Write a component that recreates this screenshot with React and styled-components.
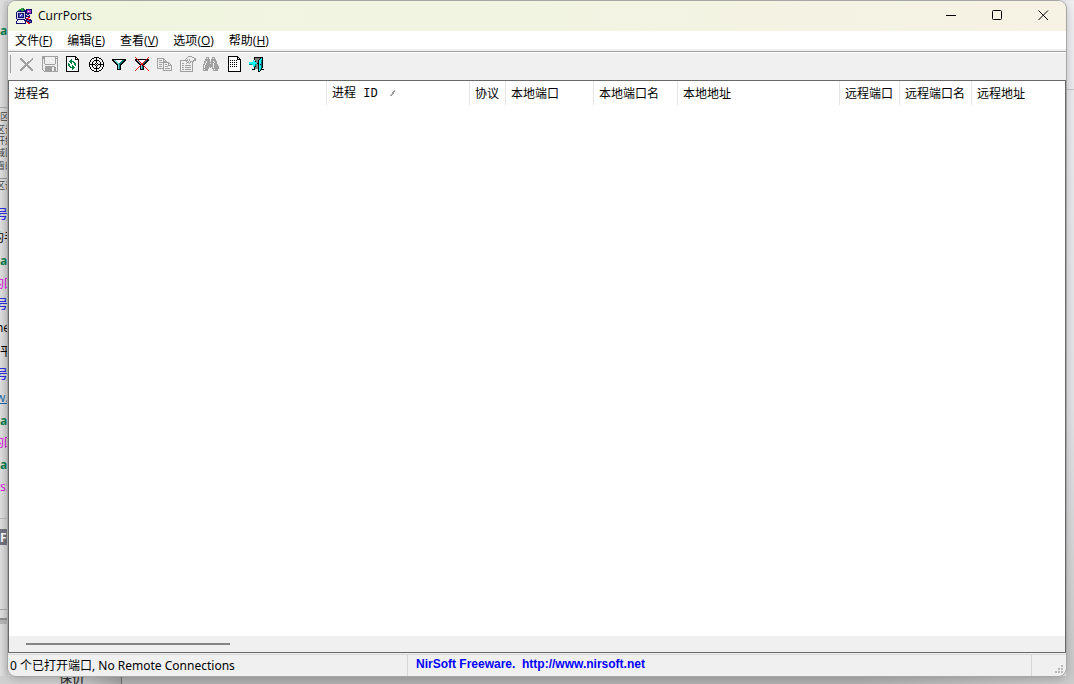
import React from 'react'
import styled, { createGlobalStyle } from 'styled-components';

const GlobalStyle = createGlobalStyle`
  * {
    box-sizing: border-box;
  }
  body {
    margin: 0;
    font-family: "Open Sans", "Noto Sans CJK SC", sans-serif;
    font-size: 12px;
    color: #000;
  }
`;

const Desktop = styled.div`
  display: grid;
  grid-template-columns: 8px minmax(0, 1fr) 8px;
  grid-template-rows: minmax(0, 1fr) 8px;
  height: 100vh;
  padding-top: 1px;
  overflow: hidden;
  background: linear-gradient(to right, #dcdcdc 0, #d0d0d0 50%, #ececee 100%);
`;

const Behind = styled.div`
  overflow: hidden;
  background: linear-gradient(to right, #e2e2e2, #cfcfcf);
`;

const BehindLine = styled.div`
  display: flex;
  align-items: center;
  height: ${(p) => p.$height}px;
  color: ${(p) => p.$color || '#000'};
  background: ${(p) => p.$fill || 'transparent'};
  font-size: ${(p) => (p.$small ? 9 : 12)}px;
  font-weight: ${(p) => (p.$bold ? 700 : 400)};
  text-decoration: ${(p) => (p.$underline ? 'underline' : 'none')};
  white-space: nowrap;

  span {
    margin-left: -${(p) => p.$cut || 0}px;
  }
`;

const RightEdge = styled.div`
  background: linear-gradient(#f0f0f3, #e6e6e9 60%, #cbcbcb);
`;

const RightTop = styled.div`
  height: 89px;
  border-bottom: 1px solid #c8c8ca;
`;

const BottomEdge = styled.div`
  grid-column: 1 / -1;
  display: flex;
  overflow: hidden;
  background: linear-gradient(to right, #b4b4b4 80%, #cccccc);
`;

const BottomTab = styled.div`
  display: flex;
  align-items: flex-end;
  justify-content: flex-end;
  width: 122px;
  padding-right: 36px;
  border-right: 1px solid #6c6c6c;
  background: linear-gradient(to right, #d2d2d2 60%, #a8a8a8);
  color: #333;
  font-size: 13px;
  font-weight: 500;
  line-height: 14px;
`;

const Window = styled.main`
  display: flex;
  flex-direction: column;
  overflow: hidden;
  border-radius: 8px;
  background: #f0f0f0;
  box-shadow: 0 0 0 1px #a6a6a6, 0 2px 12px rgba(0, 0, 0, 0.25);
  z-index: 1;
`;

const TitleBar = styled.header`
  display: flex;
  align-items: flex-start;
  height: 30px;
  background: linear-gradient(to right, #eff5df, #f2f4e2 50%, #f6f2e4);
`;

const TitleGroup = styled.div`
  display: flex;
  flex: 1;
  align-items: center;
  gap: 6px;
  height: 29px;
  padding-left: 8px;
`;

const Title = styled.h1`
  margin: 0;
  font-size: 12px;
  font-weight: 400;
  line-height: 16px;
`;

const CaptionButton = styled.button`
  display: flex;
  align-items: center;
  justify-content: center;
  width: 46px;
  height: 29px;
  padding: 0;
  border: none;
  background: none;
`;

const MenuBar = styled.nav`
  display: flex;
  gap: 1px;
  height: 18px;
  background: #fff;
`;

const MenuButton = styled.button`
  padding: 0 7px;
  border: none;
  background: none;
  color: #000;
  font: inherit;
  line-height: 20px;
  white-space: nowrap;
`;

const ToolBar = styled.div`
  display: flex;
  align-items: center;
  height: 31px;
  padding: 2px 0 4px 2px;
  background: linear-gradient(#f0f0f0 2px, #a0a0a0 2px, #a0a0a0 3px, #fff 3px, #fff 4px, #f0f0f0 4px);
`;

const Grip = styled.span`
  width: 1px;
  height: 18px;
  margin-right: 4px;
  background: #a0a0a0;
`;

const ToolButton = styled.button`
  display: flex;
  align-items: center;
  justify-content: center;
  width: 23px;
  height: 22px;
  padding: 0;
  border: none;
  background: none;
`;

const ListFrame = styled.section`
  display: flex;
  flex-direction: column;
  flex: 1;
  min-height: 0;
  border: 1px solid #696969;
  background: #fff;
`;

const ListBody = styled.div`
  flex: 1;
  overflow: hidden;
`;

const PortTable = styled.table`
  width: 100%;
  table-layout: fixed;
  border-collapse: separate;
  border-spacing: 0;
`;

const Column = styled.col`
  width: ${(p) => (p.$width ? `${p.$width}px` : 'auto')};
`;

const HeadCell = styled.th`
  height: 24px;
  padding: 0 0 0 5px;
  border-right: ${(p) => (p.$last ? 'none' : '1px solid #e5e5e5')};
  font-family: "Noto Sans CJK SC", sans-serif;
  font-weight: 400;
  line-height: 16px;
  text-align: left;
  white-space: nowrap;
  overflow: hidden;
`;

const Mono = styled.span`
  font-family: "Liberation Mono", monospace;
`;

const SortMark = styled.svg`
  margin-left: 12px;
`;

const ScrollTrack = styled.div`
  height: 16px;
  padding: 7px 17px;
  background: #f0f0f0;
`;

const ScrollThumb = styled.div`
  width: 20%;
  height: 2px;
  background: #858585;
`;

const StatusBar = styled.footer`
  display: flex;
  height: 23px;
  padding-top: 1px;
  border-top: 1px solid #f0f0f0;
  box-shadow: inset 0 1px 0 #d7d7d7;
`;

const StatusText = styled.div`
  width: 400px;
  padding-left: 2px;
  border-right: 1px solid #d7d7d7;
  font-family: "Noto Sans", "Noto Sans CJK SC", sans-serif;
  line-height: 21px;
  white-space: nowrap;
`;

const StatusLink = styled.div`
  flex: 1;
  padding-left: 8px;
  border-right: 1px solid #d7d7d7;

  a {
    color: #0000ff;
    font: bold 12px/18px "Liberation Sans", Arial, sans-serif;
    text-decoration: none;
    white-space: pre;
  }
`;

const SizeGrip = styled.div`
  display: flex;
  align-items: flex-end;
  justify-content: flex-end;
  width: 34px;
  padding: 0 2px 2px 0;
`;

const palette = {
  k: '#000000',
  g: '#a0a0a0',
  d: '#808080',
  w: '#ffffff',
  l: '#d0d0e0',
  n: '#008040',
  t: '#008080',
  c: '#00ffff',
  a: '#70d0d0',
  r: '#ff0000',
  b: '#101070',
  u: '#5050c8',
  p: '#b040d0',
  e: '#30a040',
};

const bitmaps = {
  app: [
    '.....eee........',
    '...eeeebe.bbbbbb',
    '..eebeeebbbppppb',
    '.bbbbbbbbbbpwppb',
    'bllllllllbbppppb',
    'blbbbbbblbbbbbbb',
    'blbuuwublb.bb...',
    'blbuwuublbbllb..',
    'blbuuuublbbbbb..',
    'blbbbbbblb..rr..',
    'bllllllllbrrp...',
    '.bbbbbbbb.bbrrb.',
    '.bwwwwwwbbbuubbb',
    'bwlwlwlwlbrbbuub',
    'bwwwwwwwwb.rrbbb',
    'bbbbbbbbbb..rr..',
  ],
  close: [
    '................',
    '................',
    '.gg..........g..',
    '.ggg........gg..',
    '..ggg......gg...',
    '...ggg...ggg....',
    '....ggg.ggg.....',
    '.....ggggg......',
    '......ggg.......',
    '.....ggggg......',
    '....ggg.ggg.....',
    '...ggg...ggg....',
    '..ggg.....ggg...',
    '.ggg.......ggg..',
    '.gg.........gg..',
    '................',
  ],
  save: [
    'gggggggggggggggg',
    'ggg..........g.g',
    'ggg..........ggg',
    'g.g..........g.g',
    'g.g..........g.g',
    'g.g..........g.g',
    'g.g..........g.g',
    'g.g..........g.g',
    'g..gggggggggg..g',
    'g..............g',
    'g..gggggggggg..g',
    'g..ggggggg..gg.g',
    'g..ggggggg..gg.g',
    'g..ggggggg..gg.g',
    '.g.ggggggg..gg.g',
    '..gggggggggggggg',
  ],
  refresh: [
    '.kkkkkkkkkk.....',
    '.kwwwwwwwwkk....',
    '.kwwwwwwwwkwk...',
    '.kwwwwnwwwkkkk..',
    '.kwwwnnwwwwwwk..',
    '.kwwnnnnnwwwwk..',
    '.kwwwnnwnnwwwk..',
    '.kwnwwnwwnnwwk..',
    '.kwnnwwwwnnwwk..',
    '.kwnnwwnwwnwwk..',
    '.kwwnnwnnwwwwk..',
    '.kwwwnnnnnwwwk..',
    '.kwwwwwnnwwwwk..',
    '.kwwwwwnwwwwwk..',
    '.kwwwwwwwwwwwk..',
    '.kkkkkkkkkkkkk..',
  ],
  target: [
    '................',
    '......kkkkk.....',
    '....kk..k..kk...',
    '...k....k....k..',
    '..k...kkkkk...k.',
    '..k..k..k..k..k.',
    '.k..k...k...k..k',
    '.k..k..k.k..k..k',
    '.kkkkkk.k.kkkkkk',
    '.k..k..k.k..k..k',
    '.k..k...k...k..k',
    '..k..k..k..k..k.',
    '..k...kkkkk...k.',
    '...k....k....k..',
    '....kk..k..kk...',
    '......kkkkk.....',
  ],
  funnel: [
    '................',
    '................',
    '................',
    '.kkkkkkkkkkkkkk.',
    '.kkaawwwwwwttkk.',
    '..kkaawwwwttkk..',
    '...kkaawwttkk...',
    '....kkaattkk....',
    '.....kkatkk.....',
    '......katk......',
    '......katk......',
    '......katk......',
    '......katk......',
    '......kkkk......',
    '................',
    '................',
  ],
  funnelOff: [
    '................',
    '.r............r.',
    '..r..........r..',
    '.kkrkkkkkkkkrkk.',
    '.kkarwwwwwwrtkk.',
    '..kkarwwwwrtkk..',
    '...kkarwwrtkk...',
    '....kkarrtkk....',
    '.....kkrrkk.....',
    '......rakr......',
    '.....rkatkr.....',
    '....r.katk.r....',
    '...r..katk..r...',
    '..r...kkkk...r..',
    '.r............r.',
    '................',
  ],
  copy: [
    '................',
    '................',
    'ggggggg.........',
    'g.....gg........',
    'g.ggg.g.g.......',
    'g.....gggg......',
    'g.gggggggggg....',
    'g.....g....gg...',
    'g.ggg.g.gg.g.g..',
    'g.....g....gggg.',
    'g.ggg.g.ggg...g.',
    'g.....g.......g.',
    'ggggggg.ggggg.g.',
    '......g.......g.',
    '......ggggggggg.',
    '................',
  ],
  properties: [
    '........gggg....',
    '.......g....gg..',
    '......g.......gg',
    '.....g.g.g....gg',
    'gggggggg.g...ggg',
    'g.....g.g.gggg..',
    'g......gg.g.g...',
    'g.gg..g..g..g...',
    'g...........g...',
    'g.gg.gggggg.g...',
    'g...........g...',
    'g.gg.gggggg.g...',
    'g...........g...',
    'g.gg.gggggg.g...',
    'g...........g...',
    'ggggggggggggg...',
  ],
  find: [
    '................',
    '...ggg...ggg....',
    '...g.g...g.g....',
    '..ggggg.ggggg...',
    '..ggggg.ggggg...',
    '.gg.ggg.gg.ggg..',
    '.gg.ggggggg.gg..',
    '.g.gggg.gg.ggg..',
    'gg.ggggggg.gggg.',
    'g.gggggggg.gggg.',
    'g.gggggggg.ggggg',
    'g.gggg.g.g.ggggg',
    'gggggg...ggggggg',
    'g.ggg.....g.ggg.',
    'ggggg.....ggggg.',
    '................',
  ],
  report: [
    '..kkkkkkkkkk....',
    '..kwwwwwwwwkk...',
    '..kwwwwwwwwkwk..',
    '..kwwwwwwwwkkkk.',
    '..kwkwkwkwkwwwk.',
    '..kwwwwwwwwwwwk.',
    '..kwkwkwkwkwwwk.',
    '..kwwwwwwwwwwwk.',
    '..kwkwkwkwkwwwk.',
    '..kwwwwwwwwwwwk.',
    '..kwkwkwkwkwwwk.',
    '..kwwwwwwwwwwwk.',
    '..kwwwwwwwwwwwk.',
    '..kwwwwwwwwwwwk.',
    '..kwwwwwwwwwwwk.',
    '..kkkkkkkkkkkkk.',
  ],
  exit: [
    '................',
    '.....kkkkkkkkk..',
    '.....kdddddkck..',
    '.....kddddkcck..',
    '....c.dddkcctk..',
    '....cckddkcctk..',
    'cccccccddkcctk..',
    'cccccccckkcctk..',
    'tttccctddkcktk..',
    '....cctddkcctk..',
    '....ctkddkcctk..',
    '.....kdddkcctk..',
    '.....kdddkcck...',
    '...kkk...kctkkk.',
    '.........kck....',
    '.........kk.....',
  ],
};

const PixelIcon = ({ name }) => (
  <svg width="16" height="16" viewBox="0 0 16 16" shapeRendering="crispEdges" aria-hidden="true">
    {bitmaps[name].map((row, y) =>
      [...row].map((ch, x) =>
        palette[ch] ? <rect key={`${x}-${y}`} x={x} y={y} width="1" height="1" fill={palette[ch]} /> : null
      )
    )}
  </svg>
);

const menus = [
  ['文件', 'F'],
  ['编辑', 'E'],
  ['查看', 'V'],
  ['选项', 'O'],
  ['帮助', 'H'],
];

const tools = [
  ['close', '关闭连接', true],
  ['save', '保存', true],
  ['refresh', '刷新'],
  ['target', '定位窗口'],
  ['funnel', '高级过滤'],
  ['funnelOff', '清除过滤'],
  ['copy', '复制', true],
  ['properties', '属性', true],
  ['find', '查找', true],
  ['report', '报告'],
  ['exit', '退出'],
];

const columns = [
  { name: '进程名', width: 318 },
  { name: '进程', mono: ' ID', width: 143, sorted: true },
  { name: '协议', width: 36 },
  { name: '本地端口', width: 88 },
  { name: '本地端口名', width: 84 },
  { name: '本地地址', width: 162 },
  { name: '远程端口', width: 60 },
  { name: '远程端口名', width: 72 },
  { name: '远程地址' },
];

const green = '#087f50';
const magenta = '#e000e0';
const blue = '#0000e8';
const grey = '#444';

// visible strip of the page under the window, top to bottom
const behindLines = [
  { height: 18 },
  { height: 22, text: 'ам', color: green, bold: true },
  { height: 66 },
  { height: 1, fill: '#a8a8a8' },
  { height: 16, text: '区', small: true, color: grey },
  { height: 10, text: '区设', small: true, color: grey, cut: 4 },
  { height: 12, text: '开始', small: true, color: grey, cut: 4 },
  { height: 13, text: '域区', small: true, color: grey, cut: 4 },
  { height: 13, text: '看的', small: true, color: grey, cut: 4 },
  { height: 6 },
  { height: 1, fill: '#999' },
  { height: 12, text: '区调', small: true, color: grey, cut: 4 },
  { height: 11 },
  { height: 23, text: '号', color: blue, cut: 4 },
  { height: 24, text: '的手', cut: 8 },
  { height: 23, text: 'ам', color: green, bold: true },
  { height: 21, text: '的回', color: magenta, cut: 8 },
  { height: 22, text: '号', color: blue, cut: 4 },
  { height: 24, text: 'ne', cut: 4 },
  { height: 24, text: '平', cut: 0 },
  { height: 22, text: '号', color: blue, cut: 4 },
  { height: 24, text: 'w.', color: '#1767a5', underline: true, cut: 4 },
  { height: 22, text: 'ам', color: green, bold: true },
  { height: 22, text: '的回', color: magenta, cut: 8 },
  { height: 22, text: 'ам', color: green, bold: true },
  { height: 22, text: 's:', color: magenta },
  { height: 21 },
  { height: 1, fill: '#bdbdbd' },
  { height: 10 },
  { height: 16, text: 'F', color: '#fff', fill: '#747480', bold: true },
  { height: 64 },
  { height: 1, fill: '#aaa' },
  { height: 8 },
  { height: 2, fill: '#909090' },
  { height: 4, fill: '#b8b8b8' },
];

const App = () => {
  return (
    <>
      <GlobalStyle />
      <Desktop>
        <Behind aria-hidden="true">
          {behindLines.map((line, i) => (
            <BehindLine
              key={i}
              $height={line.height}
              $color={line.color}
              $fill={line.fill}
              $small={line.small}
              $bold={line.bold}
              $underline={line.underline}
              $cut={line.cut}
            >
              {line.text && <span>{line.text}</span>}
            </BehindLine>
          ))}
        </Behind>
        <Window>
          <TitleBar>
            <TitleGroup>
              <PixelIcon name="app" />
              <Title>CurrPorts</Title>
            </TitleGroup>
            <CaptionButton aria-label="最小化">
              <svg width="11" height="11" viewBox="0 0 11 11">
                <path d="M0 5.5h10" stroke="#000" />
              </svg>
            </CaptionButton>
            <CaptionButton aria-label="最大化">
              <svg width="11" height="11" viewBox="0 0 11 11">
                <rect x="0.5" y="0.5" width="9" height="9" rx="1" fill="none" stroke="#000" />
              </svg>
            </CaptionButton>
            <CaptionButton aria-label="关闭">
              <svg width="11" height="11" viewBox="0 0 11 11">
                <path d="M0.5 0.5l9.5 9.5M10 0.5l-9.5 9.5" stroke="#000" />
              </svg>
            </CaptionButton>
          </TitleBar>
          <MenuBar>
            {menus.map(([label, hotkey]) => (
              <MenuButton key={hotkey}>
                {label}(<u>{hotkey}</u>)
              </MenuButton>
            ))}
          </MenuBar>
          <ToolBar>
            <Grip />
            {tools.map(([icon, label, disabled]) => (
              <ToolButton key={icon} aria-label={label} disabled={disabled}>
                <PixelIcon name={icon} />
              </ToolButton>
            ))}
          </ToolBar>
          <ListFrame>
            <ListBody>
              <PortTable>
                <colgroup>
                  {columns.map((col) => (
                    <Column key={col.name} $width={col.width} />
                  ))}
                </colgroup>
                <thead>
                  <tr>
                    {columns.map((col) => (
                      <HeadCell key={col.name} $last={!col.width} scope="col">
                        {col.name}
                        {col.mono && <Mono>{col.mono}</Mono>}
                        {col.sorted && (
                          <SortMark width="6" height="7" viewBox="0 0 6 7" shapeRendering="crispEdges">
                            <path d="M4 0h1v2h-1v2h-1v1h-1v1h-2v-1h1v-1h1v-2h1v-1h1z" fill="#a0a0a0" />
                          </SortMark>
                        )}
                      </HeadCell>
                    ))}
                  </tr>
                </thead>
              </PortTable>
            </ListBody>
            <ScrollTrack>
              <ScrollThumb />
            </ScrollTrack>
          </ListFrame>
          <StatusBar>
            <StatusText>0 个已打开端口, No Remote Connections</StatusText>
            <StatusLink>
              <a href="http://www.nirsoft.net">{'NirSoft Freeware.  http://www.nirsoft.net'}</a>
            </StatusLink>
            <SizeGrip>
              <svg width="9" height="9" viewBox="0 0 9 9" shapeRendering="crispEdges" fill="#b8b8b8">
                <path d="M6 0h2v2h-2zM6 3h2v2h-2zM3 3h2v2h-2zM6 6h2v2h-2zM3 6h2v2h-2zM0 6h2v2h-2z" />
              </svg>
            </SizeGrip>
          </StatusBar>
        </Window>
        <RightEdge>
          <RightTop />
        </RightEdge>
        <BottomEdge>
          <BottomTab>保价</BottomTab>
        </BottomEdge>
      </Desktop>
    </>
  );
}

export default App;
